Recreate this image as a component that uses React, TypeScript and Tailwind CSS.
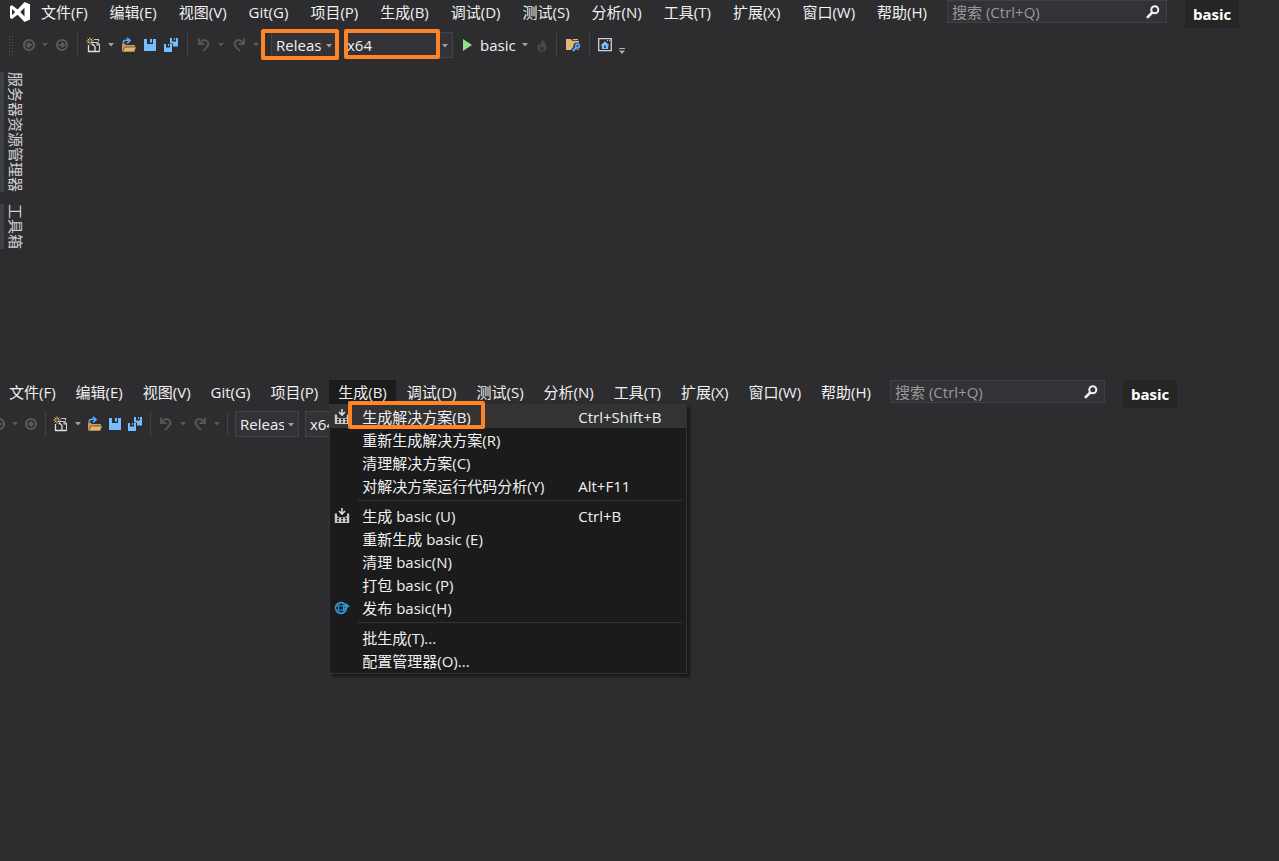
import React from 'react';

const menus = ['文件(F)', '编辑(E)', '视图(V)', 'Git(G)', '项目(P)', '生成(B)', '调试(D)', '测试(S)', '分析(N)', '工具(T)', '扩展(X)', '窗口(W)', '帮助(H)'];

type Entry = { label: string; keys?: string; icon?: 'build' | 'publish'; active?: boolean };

const buildMenu: Entry[][] = [
  [
    { label: '生成解决方案(B)', keys: 'Ctrl+Shift+B', icon: 'build', active: true },
    { label: '重新生成解决方案(R)' },
    { label: '清理解决方案(C)' },
    { label: '对解决方案运行代码分析(Y)', keys: 'Alt+F11' },
  ],
  [
    { label: '生成 basic (U)', keys: 'Ctrl+B', icon: 'build' },
    { label: '重新生成 basic (E)' },
    { label: '清理 basic(N)' },
    { label: '打包 basic (P)' },
    { label: '发布 basic(H)', icon: 'publish' },
  ],
  [{ label: '批生成(T)...' }, { label: '配置管理器(O)...' }],
];

function Caret({ dim = false }: { dim?: boolean }) {
  return (
    <svg className={`h-1 w-1.5 shrink-0 ${dim ? 'text-[#5a5a5d]' : 'text-[#a0a0a3]'}`} viewBox="0 0 6 4">
      <path fill="currentColor" d="M0 0h6L3 3.5z" />
    </svg>
  );
}

function VsLogo() {
  return (
    <svg className="h-5 w-5" viewBox="0 0 20 20">
      <path fill="#fff" fillRule="evenodd" d="M14.5 0 20 2.3v15.2L14.5 20 7.6 12.7 2 17 0 16V4.2L2 3.2l5.6 4.3zM14.5 5.7 10.2 10l4.3 4.4zM2 7v6.2L5.2 10z" />
    </svg>
  );
}

function Arrow({ flip = false }: { flip?: boolean }) {
  return (
    <svg className={`h-3.5 w-3.5 ${flip ? 'rotate-180' : ''}`} viewBox="0 0 14 14">
      <circle cx="7" cy="7" r="5" fill="none" stroke="#59595c" strokeWidth="2.2" />
      <path d="M10 7H5M7.500 4.500 5 7l2.500 2.500" fill="none" stroke="#59595c" strokeWidth="2" />
    </svg>
  );
}

function NewProject() {
  return (
    <svg className="h-4 w-4" viewBox="0 0 16 16" fill="none">
      <path d="M8 2.500h4.500v2M5.500 5.500h6l2 2v7.500M11 5.500v2.500h2.500" stroke="#c8c8c8" strokeWidth="1.100" />
      <path d="M2.500 8v6.500h6.500V9.500L7 7.500H5.500M9 14.500h4.500" stroke="#e0e0e0" strokeWidth="1.300" />
      <path d="M4 .5v7M.5 4h7M1.500 1.500l5 5M6.500 1.500l-5 5" stroke="#e2bd85" strokeWidth="1" />
      <circle cx="4" cy="4" r="1" fill="#2d2d30" />
    </svg>
  );
}

function OpenFolder() {
  return (
    <svg className="h-4 w-4" viewBox="0 0 16 16">
      <path d="M1 6.500h2.500L5 8h9v7H1z" fill="#c99a55" />
      <path d="M4 10h11.500L13 15H1.500z" fill="#e5b56d" stroke="#2d2d30" strokeWidth=".6" />
      <path d="M2.500 6C1.500 3.500 4 2.800 8.500 3.500M6 .8l3 2.700-3 3" fill="none" stroke="#55aaff" strokeWidth="1.700" />
    </svg>
  );
}

function Save() {
  return (
    <svg className="h-3 w-3" viewBox="0 0 12 12">
      <path d="M0 0h3v5h6V0h3v12H0z" fill="#75beff" />
      <path d="M6 0h2v3.500H6z" fill="#75beff" />
    </svg>
  );
}

function SaveAll() {
  return (
    <svg className="h-4 w-4" viewBox="0 0 16 16">
      <path d="M7 1h2v3.500h4V1h2v8.500H10V6.500H7z" fill="#75beff" />
      <path d="M11 1h1v2h-1zM1 7h2v3.500h4V7h2v8H1zM5 7h1v2H5z" fill="#75beff" />
    </svg>
  );
}

function Undo({ flip = false }: { flip?: boolean }) {
  return (
    <svg className={`h-4 w-4 ${flip ? '-scale-x-100' : ''}`} viewBox="0 0 16 16">
      <path d="M3 1.500V7h5.500M3.500 6.500C6 3 9 2 11.500 4.500 14 7.500 11 10.500 7 14" fill="none" stroke="#555558" strokeWidth="2" />
    </svg>
  );
}

function Flame() {
  return (
    <svg className="h-3.5 w-3" viewBox="0 0 12 14">
      <path d="M6 0c.5 3 4.500 5 4.500 9A4.700 4.700 0 0 1 6 14a4.700 4.700 0 0 1-4.800-5c0-1.500.6-2.500 1.500-3.500l.8 2C4.800 5.500 6 3 6 0zm0 8c-.8 1.500-1.500 2-1.500 3.200a1.600 1.600 0 0 0 3.200 0C7.700 10 6.500 9.500 6 8z" fill="#48484b" />
    </svg>
  );
}

function FolderSearch() {
  return (
    <svg className="h-4 w-4" viewBox="0 0 16 16">
      <path d="M1 2h5l1.500 2H14v9H1z" fill="#dcb67a" />
      <path d="M7.500 2H13v1.200H8.300z" fill="#dcb67a" />
      <circle cx="12" cy="9" r="3.600" fill="#2d2d30" />
      <path d="m12 9-4.500 5" stroke="#2d2d30" strokeWidth="4" />
      <circle cx="12.500" cy="9" r="1.800" fill="none" stroke="#55aaff" strokeWidth="1.800" />
      <path d="m11.200 10.500-3.400 3.500" stroke="#55aaff" strokeWidth="2" />
    </svg>
  );
}

function HomeWindow() {
  return (
    <svg className="h-3.5 w-3.5" viewBox="0 0 14 14">
      <path d="M.7.7h12.600v12H.7z" fill="none" stroke="#d0d0d0" strokeWidth="1.300" />
      <path d="M9 2h1v1H9zM11 2h1v1h-1z" fill="#d0d0d0" />
      <path d="M7 3.200 2.500 7.500h1.300V11h6.400V7.500h1.300zM6.200 7.500h1.600V10H6.200z" fill="#75beff" fillRule="evenodd" />
    </svg>
  );
}

function Magnifier() {
  return (
    <svg className="h-3.5 w-3.5" viewBox="0 0 14 14">
      <circle cx="8.800" cy="4.800" r="3.500" fill="none" stroke="#f1f1f1" strokeWidth="2" />
      <path d="M6.200 7.500 1 12.800" stroke="#f1f1f1" strokeWidth="2.600" />
    </svg>
  );
}

function BuildIcon() {
  return (
    <svg className="h-4 w-4" viewBox="0 0 16 16" fill="none">
      <path d="M8 0v6M5 3l3 3 3-3" stroke="#d8d8d8" strokeWidth="1.600" />
      <path d="M.8 5.500h2.200V8l2 1.200h6L13 8V5.500h2.200V15H.8z" fill="#c8c8c8" />
      <path d="M3 10.500h2M7 10.500h2M11 10.500h2M3 13h2M7 13h2M11 13h2" stroke="#1b1b1c" strokeWidth="1.300" />
    </svg>
  );
}

function PublishIcon() {
  return (
    <svg className="h-4 w-4" viewBox="0 0 16 16" fill="none" stroke="#2a9ad8">
      <circle cx="7" cy="8" r="5.500" strokeWidth="1.500" />
      <ellipse cx="7" cy="8" rx="2.500" ry="5.500" />
      <path d="M1.500 6h9M1.500 10h10" />
      <path d="M9 9.500c2.500 0 3.500-1 3.500-3.500M10 7l2.500-2.500L15 7" strokeWidth="1.800" />
    </svg>
  );
}

function Divider() {
  return <div className="mx-px h-6 w-px bg-[#424245]" />;
}

function BuildDropdown() {
  return (
    <div className="absolute top-full left-0 z-10 w-[358px] border border-[#333337] bg-[#1b1b1c] pb-px text-[#f1f1f1] shadow-[3px_3px_2px_rgba(0,0,0,0.45)]">
      {buildMenu.map((group, i) => (
        <div key={i} className={i > 0 ? 'relative pt-[7px]' : ''}>
          {i > 0 && <hr className="absolute top-[3px] right-1 left-7 border-[#333337]" />}
          {group.map(item => (
            <button
              key={item.label}
              className={`flex h-[23px] w-full items-center text-left whitespace-nowrap ${item.active ? 'bg-[#333334]' : ''}`}
            >
              <span className="w-8 pl-1">
                {item.icon === 'build' && <BuildIcon />}
                {item.icon === 'publish' && <PublishIcon />}
              </span>
              <span className="w-[216px]">{item.label}</span>
              <span>{item.keys}</span>
            </button>
          ))}
        </div>
      ))}
      <div className="pointer-events-none absolute -top-1 left-[18px] h-7 w-[137px] rounded-xs border-4 border-[#ff8426]" />
    </div>
  );
}

function MenuBar({ open = false }: { open?: boolean }) {
  return (
    <header className={`flex items-start ${open ? '' : 'pl-[10px]'}`}>
      {!open && <div className="mt-0.5 mr-px"><VsLogo /></div>}
      <nav className="flex shrink-0 gap-0.5">
        {menus.map(m => {
          const expanded = open && m === '生成(B)';
          return (
            <div key={m} className={`relative ${expanded ? 'bg-[#1b1b1c]' : ''}`}>
              <button className={`h-6 whitespace-nowrap text-[#f1f1f1] ${open ? 'px-[9px]' : 'px-[10px]'}`}>{m}</button>
              {expanded && <BuildDropdown />}
            </div>
          );
        })}
      </nav>
      <label className={`ml-2.5 flex h-[23px] items-center border border-[#3f3f46] bg-[#333337] pr-1.5 pl-1 ${open ? 'w-[215px]' : 'w-[220px]'}`}>
        <input
          type="search"
          aria-label="搜索"
          placeholder="搜索 (Ctrl+Q)"
          className="min-w-0 flex-1 bg-transparent outline-none placeholder:text-[#999999]"
        />
        <Magnifier />
      </label>
      <div className="ml-[18px] flex h-7 items-center bg-[#252526] px-2 font-bold text-white">basic</div>
    </header>
  );
}

function Combo({ label, value, className, inset = 'pl-1' }: { label: string; value: string; className: string; inset?: string }) {
  return (
    <div className={`relative h-[26px] border border-[#434346] bg-[#333337] ${className}`}>
      <select aria-label={label} className={`h-full w-full appearance-none bg-transparent pr-3.5 text-[#f1f1f1] outline-none ${inset}`}>
        <option>{value}</option>
      </select>
      <span className="pointer-events-none absolute top-[11px] right-1">
        <Caret />
      </span>
    </div>
  );
}

function IconButton({ label, children }: { label: string; children: React.ReactNode }) {
  return (
    <button aria-label={label} className="flex shrink-0 items-center gap-1.5">
      {children}
    </button>
  );
}

function FileTools() {
  return (
    <>
      <IconButton label="后退"><Arrow /><Caret dim /></IconButton>
      <IconButton label="前进"><Arrow flip /></IconButton>
      <Divider />
      <IconButton label="新建项目"><NewProject /><Caret /></IconButton>
      <IconButton label="打开文件"><OpenFolder /></IconButton>
      <IconButton label="保存"><Save /></IconButton>
      <IconButton label="全部保存"><SaveAll /></IconButton>
      <Divider />
      <IconButton label="撤消"><Undo /><Caret dim /></IconButton>
      <IconButton label="重做"><Undo flip /><Caret dim /></IconButton>
    </>
  );
}

function MainToolbar() {
  return (
    <div className="mt-1 flex h-[26px] items-center pl-2">
      <div className="mr-2 h-5 w-1.5 bg-[radial-gradient(#55555a_1px,transparent_1px)] bg-size-[3px_3px]" />
      <div className="flex items-center gap-[7px]">
        <FileTools />
      </div>
      <div className="relative ml-3">
        <Combo label="解决方案配置" value="Release" className="w-[66px]" />
        <div className="pointer-events-none absolute -top-[3px] -left-[10px] h-[31px] w-[78px] rounded-xs border-4 border-[#ff8426]" />
      </div>
      <div className="relative ml-[7px]">
        <Combo label="解决方案平台" value="x64" className="w-[109px]" inset="pl-0.5" />
        <div className="pointer-events-none absolute -top-[3px] left-0 h-[30px] w-24 rounded-xs border-4 border-[#ff8426]" />
      </div>
      <button className="ml-2.5 flex items-center text-[#f1f1f1]">
        <svg className="mr-2 h-3 w-[9px]" viewBox="0 0 9 12"><path d="M0 0v12l9-6z" fill="#8ae28a" /></svg>
        <span className="mr-1.5">basic</span>
        <Caret />
      </button>
      <div className="ml-2 flex items-center gap-[7px]">
        <IconButton label="热重载"><Flame /></IconButton>
        <Divider />
        <IconButton label="在文件中查找"><FolderSearch /></IconButton>
        <Divider />
        <IconButton label="起始页"><HomeWindow /></IconButton>
        <svg className="mt-3 h-1.5 w-1.5" viewBox="0 0 6 6"><path d="M0 0h6v1H0zM0 2.500h6L3 6z" fill="#b0b0b0" /></svg>
      </div>
    </div>
  );
}

function SecondToolbar() {
  return (
    <div className="mt-[3px] flex h-[26px] items-center overflow-hidden">
      <div className="-ml-2 flex items-center gap-1.5">
        <FileTools />
        <Divider />
        <Combo label="解决方案配置" value="Release" className="w-16" />
        <Combo label="解决方案平台" value="x64" className="w-[109px]" />
      </div>
    </div>
  );
}

export default function App() {
  return (
    <div className="flex min-h-screen flex-col overflow-x-hidden bg-[#2d2d30] font-['Open_Sans','Noto_Sans_CJK_SC',sans-serif] text-[15px] leading-[22px]">
      <section className="min-h-[380px]">
        <MenuBar />
        <MainToolbar />
        <aside className="mt-3.5 flex flex-col items-start gap-3">
          {['服务器资源管理器', '工具箱'].map(t => (
            <button key={t} className="border-l-4 border-[#3f3f46] pl-px text-[#d0d0d0] [text-orientation:sideways] [writing-mode:vertical-rl]">{t}</button>
          ))}
        </aside>
      </section>
      <section>
        <MenuBar open />
        <SecondToolbar />
      </section>
    </div>
  );
}
